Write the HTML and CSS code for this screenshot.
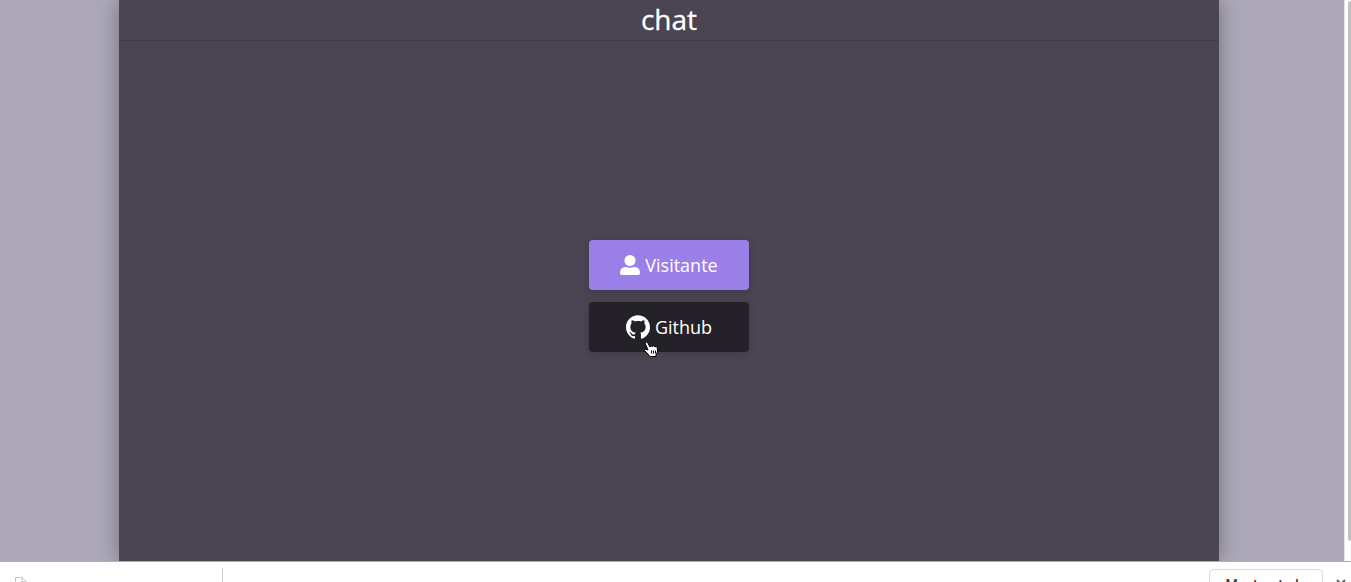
FILE: index.html
```html
<!DOCTYPE html>
<html lang="pt-BR">
<head>
<meta charset="utf-8">
<title>chat</title>
<link rel="stylesheet" href="styles.css">
</head>
<body>
<div class="viewport">
  <div class="page">
    <main class="panel">
      <header class="panel-header"><h1 class="title">chat</h1></header>
      <div class="login">
        <button class="button button-guest" type="button">
          <svg class="icon-user" viewBox="0 0 20 20" aria-hidden="true"><circle cx="10" cy="5.5" r="5.500"/><path d="M0 18.200Q0 12 5.500 12q4.500 1.600 9 0Q20 12 20 18.200q0 1.800-1.800 1.800H1.800Q0 20 0 18.200z"/></svg>
          <span>Visitante</span>
        </button>
        <button class="button button-github" type="button">
          <svg class="icon-github" viewBox="0 0 24 24" aria-hidden="true"><path d="M12 .297c-6.630 0-12 5.373-12 12 0 5.303 3.438 9.800 8.205 11.385.6.113.82-.258.82-.577 0-.285-.01-1.040-.015-2.040-3.338.724-4.042-1.610-4.042-1.610C4.422 18.070 3.633 17.700 3.633 17.700c-1.087-.744.084-.729.084-.729 1.205.084 1.838 1.236 1.838 1.236 1.070 1.835 2.809 1.305 3.495.998.108-.776.417-1.305.76-1.605-2.665-.3-5.466-1.332-5.466-5.930 0-1.310.465-2.380 1.235-3.220-.135-.303-.54-1.523.105-3.176 0 0 1.005-.322 3.300 1.230.96-.267 1.980-.399 3-.405 1.020.006 2.040.138 3 .405 2.280-1.552 3.285-1.230 3.285-1.230.645 1.653.24 2.873.12 3.176.765.84 1.230 1.910 1.230 3.220 0 4.610-2.805 5.625-5.475 5.920.42.36.81 1.096.81 2.220 0 1.606-.015 2.896-.015 3.286 0 .315.21.69.825.57C20.565 22.092 24 17.592 24 12.297c0-6.627-5.373-12-12-12"/></svg>
          <span>Github</span>
          <svg class="cursor" viewBox="0 0 14 16" aria-hidden="true"><path d="M1 2Q2 0 3.500 1.500L6 6l1-1.200 1.500.8 1-.8 1.500 1 1-.3 1.300 1.300.2 4-1.500 3V15.500H6L3 12 .6 9.500Q1 7.500 3 8.500L4 9z"/><path class="cursor-lines" d="M7.500 9.500v3M9.500 9.500v3M11.500 9.500v3"/></svg>
        </button>
      </div>
    </main>
  </div>
  <div class="scrollbar"><div class="thumb"></div></div>
</div>
<footer class="downloads">
  <div class="download-item">
    <svg class="icon-file" viewBox="0 0 12 14" aria-hidden="true"><path d="M.5 13.500V.5h6.500l4.500 4.500v8.500zM7 .5V5h4.500"/></svg>
  </div>
  <button class="show-all" type="button">Mostrar todo</button>
  <button class="close" type="button" aria-label="Fechar"><svg viewBox="0 0 10 10" aria-hidden="true"><path d="M1 1l8 8M9 1L1 9"/></svg></button>
</footer>
</body>
</html>
```
FILE: styles.css
```css
* { box-sizing: border-box; }
body {
  margin: 0;
  height: 100vh;
  overflow: hidden;
  display: flex;
  flex-direction: column;
  background: #fff;
  font-family: "Open Sans", "Noto Sans", sans-serif;
}
.viewport { flex: 1; min-height: 0; display: flex; }
.page {
  flex: 1;
  display: flex;
  justify-content: center;
  padding-right: 6px;
  background: #aca8b9;
  overflow: hidden;
}
.panel {
  width: 100%;
  max-width: 1100px;
  display: flex;
  flex-direction: column;
  background: #4a4453;
  box-shadow: 0 0 20px rgba(0, 0, 0, 0.35);
}
.panel-header {
  padding-bottom: 2px;
  border-bottom: 1px solid #403b49;
  text-align: center;
}
.title {
  margin: 0;
  color: #fff;
  font-size: 28px;
  line-height: 38px;
  font-weight: 400;
  -webkit-text-stroke: 0.3px #fff;
}
.login {
  flex: 1;
  display: flex;
  flex-direction: column;
  align-items: center;
  justify-content: center;
  gap: 12px;
  padding-bottom: 10px;
}
.button {
  position: relative;
  width: 160px;
  height: 50px;
  display: flex;
  align-items: center;
  justify-content: center;
  gap: 5px;
  border: 0;
  border-radius: 4px;
  color: #fff;
  font: 400 18px/24px "Open Sans", "Noto Sans", sans-serif;
  box-shadow: 0 1px 8px rgba(0, 0, 0, 0.15);
  cursor: pointer;
}
.button-guest { background: #9b7fe8; }
.button-github { background: #242228; }
.icon-user { width: 20px; height: 20px; fill: #fff; }
.icon-github { width: 24px; height: 24px; fill: #fff; }
.cursor {
  position: absolute;
  left: 55px;
  top: 39px;
  width: 14px;
  height: 16px;
  fill: #fff;
  stroke: #000;
  overflow: visible;
}
.cursor-lines { fill: none; }
.scrollbar {
  width: 7px;
  padding: 1px 0 20px 3px;
  border-left: 1px solid #e4e3e7;
  background: #fff;
}
.thumb { height: 100%; border-radius: 4px 0 0 4px; background: #c1c1c1; }
.downloads {
  height: 21px;
  display: flex;
  align-items: flex-start;
  border-top: 1px solid #b0aeb4;
  background: #fff;
  overflow: hidden;
}
.download-item {
  width: 223px;
  height: 40px;
  margin: 6px auto 0 0;
  padding: 9px 15px;
  border-right: 1px solid #c8c8c8;
}
.icon-file { display: block; width: 12px; height: 14px; fill: none; stroke: #c4c4c4; }
.show-all {
  flex: none;
  width: 114px;
  height: 32px;
  margin-top: 7px;
  padding: 0;
  border: 1px solid #d9d9de;
  border-radius: 4px;
  background: #fff;
  color: #3c4043;
  font: 500 14px/30px Roboto, sans-serif;
}
.close { flex: none; margin: 17px 5px 0 13px; padding: 0; border: 0; background: none; }
.close svg { display: block; width: 10px; height: 10px; fill: none; stroke: #5f6368; stroke-width: 2; }
```
